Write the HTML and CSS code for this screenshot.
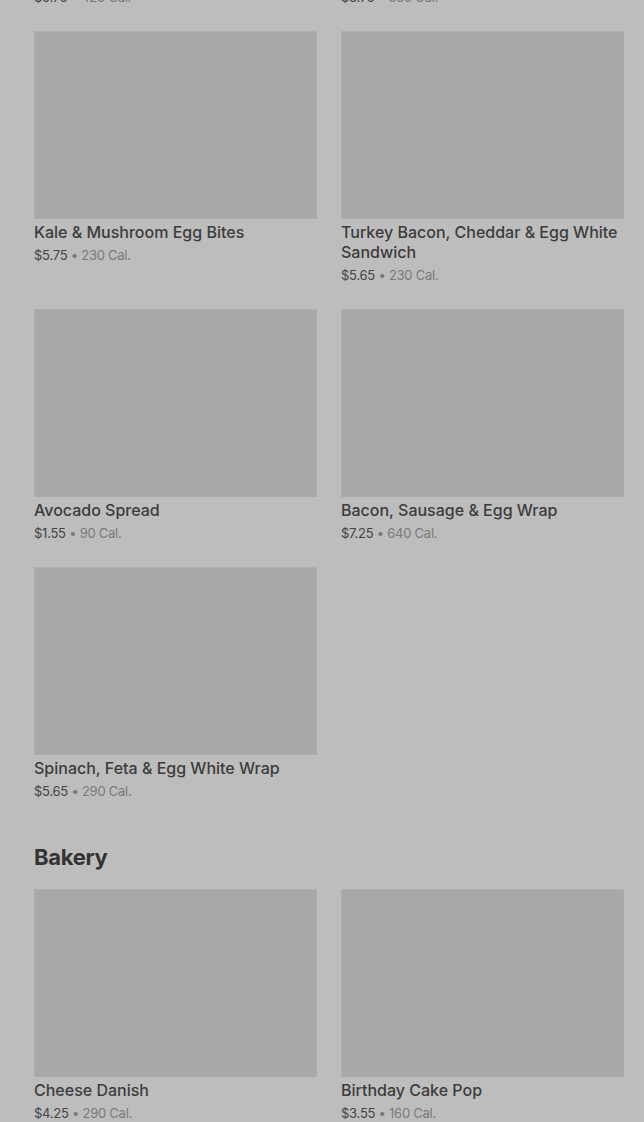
FILE: index.html
```html
<!DOCTYPE html>
<html lang="en">
<head>
<meta charset="utf-8">
<title>Menu</title>
<link rel="stylesheet" href="styles.css">
</head>
<body>
<main class="menu">
  <section class="section section--first">
    <div class="grid">
      <article class="card">
        <div class="thumb"></div>
        <h3 class="name">Spinach &amp; Feta Egg Bites</h3>
        <p class="meta"><span class="price">$5.75</span> • 420 Cal.</p>
      </article>
      <article class="card">
        <div class="thumb"></div>
        <h3 class="name">Rolled &amp; Steel-Cut Oatmeal</h3>
        <p class="meta"><span class="price">$3.75</span> • 330 Cal.</p>
      </article>
      <article class="card">
        <div class="thumb"></div>
        <h3 class="name">Kale &amp; Mushroom Egg Bites</h3>
        <p class="meta"><span class="price">$5.75</span> • 230 Cal.</p>
      </article>
      <article class="card">
        <div class="thumb"></div>
        <h3 class="name">Turkey Bacon, Cheddar &amp; Egg White Sandwich</h3>
        <p class="meta"><span class="price">$5.65</span> • 230 Cal.</p>
      </article>
      <article class="card">
        <div class="thumb"></div>
        <h3 class="name">Avocado Spread</h3>
        <p class="meta"><span class="price">$1.55</span> • 90 Cal.</p>
      </article>
      <article class="card">
        <div class="thumb"></div>
        <h3 class="name">Bacon, Sausage &amp; Egg Wrap</h3>
        <p class="meta"><span class="price">$7.25</span> • 640 Cal.</p>
      </article>
      <article class="card">
        <div class="thumb"></div>
        <h3 class="name">Spinach, Feta &amp; Egg White Wrap</h3>
        <p class="meta"><span class="price">$5.65</span> • 290 Cal.</p>
      </article>
    </div>
  </section>
  <section class="section">
    <h2 class="section-title">Bakery</h2>
    <div class="grid">
      <article class="card">
        <div class="thumb"></div>
        <h3 class="name">Cheese Danish</h3>
        <p class="meta"><span class="price">$4.25</span> • 290 Cal.</p>
      </article>
      <article class="card">
        <div class="thumb"></div>
        <h3 class="name">Birthday Cake Pop</h3>
        <p class="meta"><span class="price">$3.55</span> • 160 Cal.</p>
      </article>
    </div>
  </section>
</main>
</body>
</html>
```
FILE: styles.css
```css
html, body {
  margin: 0;
  padding: 0;
  background: #bdbdbd;
  overflow: hidden;
}
body {
  font-family: Inter, Roboto, "Liberation Sans", Arial, sans-serif;
  color: #3a3a3a;
}
.menu {
  padding: 0 20px 0 34px;
}
.section--first {
  margin-top: -227px;
}
.section-title {
  margin: 43px 0 18px;
  font-size: 22px;
  line-height: 28px;
  font-weight: 700;
  color: #333;
  letter-spacing: -0.3px;
}
.grid {
  display: grid;
  grid-template-columns: 283px 283px;
  column-gap: 24px;
  row-gap: 25px;
  align-items: start;
}
.thumb {
  height: 188px;
  background: #a8a8a8;
  box-shadow: inset 1px 1px 0 0 #afafaf, inset -1px -1px 0 0 #ababab;
}
.name {
  margin: 3px 0 0;
  font-size: 16px;
  line-height: 20px;
  font-weight: 500;
  color: #3c3c3c;
}
.meta {
  margin: 4px 0 0;
  font-size: 13px;
  line-height: 18px;
  color: #7a7a7a;
  letter-spacing: -0.25px;
}
.price {
  color: #444;
}
```
